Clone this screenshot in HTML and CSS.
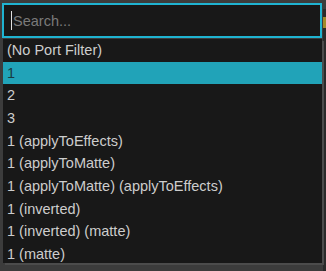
FILE: index.html
```html
<!DOCTYPE html>
<html>
<head>
<meta charset="utf-8">
<link rel="stylesheet" href="styles.css">
</head>
<body>
<div class="side"><div class="side-knob"></div></div>
<div class="popup">
  <div class="search"><span class="caret"></span><span class="placeholder">Search...</span></div>
  <ul class="list">
    <li class="item">(No Port Filter)</li>
    <li class="item selected">1</li>
    <li class="item">2</li>
    <li class="item">3</li>
    <li class="item">1 (applyToEffects)</li>
    <li class="item">1 (applyToMatte)</li>
    <li class="item">1 (applyToMatte) (applyToEffects)</li>
    <li class="item">1 (inverted)</li>
    <li class="item">1 (inverted) (matte)</li>
    <li class="item">1 (matte)</li>
  </ul>
</div>
</body>
</html>
```
FILE: styles.css
```css
html, body {
  margin: 0;
  padding: 0;
  width: 326px;
  height: 271px;
  overflow: hidden;
  background: #3c3c3c;
  font-family: "Liberation Sans", Arial, sans-serif;
}
.side {
  position: absolute;
  left: 323px;
  top: 9px;
  width: 3px;
  height: 262px;
  background: #2a2a2a;
}
.side-knob {
  margin-top: 8px;
  height: 11px;
  background: #a08a2a;
}
.popup {
  position: relative;
  padding: 3px 0 0 2px;
  width: 320px;
  display: flex;
  flex-direction: column;
  gap: 1px;
}
.search {
  box-sizing: border-box;
  height: 35px;
  border: 2px solid #1fb3d1;
  background: #181818;
  display: flex;
  align-items: center;
  padding-left: 7px;
}
.caret {
  width: 1px;
  height: 19px;
  background: #e0e0e0;
}
.placeholder {
  color: #7a7a7a;
  font-size: 14.5px;
  margin-left: 1px;
}
.list {
  margin: 0;
  padding: 0;
  list-style: none;
  box-sizing: border-box;
  width: 319px;
  margin-left: 1px;
  height: 224px;
  overflow: hidden;
  background: #181818;
  box-shadow: 2px 2px 0 #4c4c4c;
}
.item {
  height: 22.67px;
  line-height: 22.67px;
  padding-left: 4px;
  color: #cdcdcd;
  font-size: 14.5px;
  white-space: nowrap;
}
.item.selected {
  background: #21a3b8;
  color: #1a3a40;
}
```
